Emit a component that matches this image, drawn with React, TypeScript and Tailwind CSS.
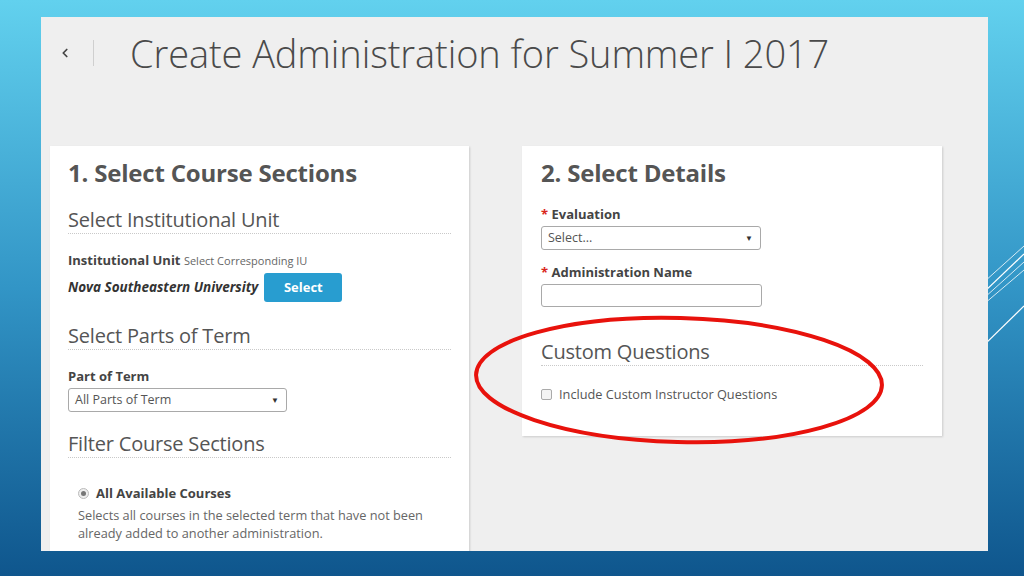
import { ChevronLeft } from 'lucide-react';

const font = { fontFamily: '"Open Sans", "Noto Sans", sans-serif' };

function SectionTitle({ children }: { children: string }) {
  return (
    <div className="border-b border-dotted border-[#c9c9c9] text-[20px] font-normal leading-[27px] tracking-[-0.2px] text-[#555]">
      {children}
    </div>
  );
}

function FakeSelect({ label, width }: { label: string; width: string }) {
  return (
    <div
      className={`flex h-[24px] items-center justify-between rounded-[3px] border border-[#a9a9a9] bg-white pl-[6px] pr-[7px] text-[12.5px] text-[#555] ${width}`}
    >
      <span>{label}</span>
      <span className="text-[8px] text-[#333]">▼</span>
    </div>
  );
}

export default function App() {
  return (
    <div
      style={font}
      className="relative h-[576px] w-[1024px] overflow-hidden bg-gradient-to-b from-[#62d1ee] via-[#3295c6] to-[#0f568d]"
    >
      {/* decorative stripes */}
      <svg className="absolute right-0 top-[230px] h-[130px] w-[40px]" viewBox="0 0 40 130">
        <line x1="0" y1="52" x2="40" y2="16" stroke="white" strokeWidth="0.8" />
        <line x1="0" y1="62" x2="40" y2="24" stroke="white" strokeWidth="1.2" />
        <line x1="0" y1="68" x2="40" y2="32" stroke="white" strokeWidth="0.8" />
        <line x1="0" y1="74" x2="40" y2="40" stroke="white" strokeWidth="0.8" />
        <line x1="0" y1="115" x2="40" y2="76" stroke="white" strokeWidth="1.2" />
      </svg>

      <div className="pl-[41px] pt-[17px]">
        <div className="relative h-[534px] w-[947px] overflow-hidden bg-[#efefef]">
          <div className="flex h-[70px] items-center pt-[1px]">
            <div className="flex w-[52px] items-center justify-end pr-[21px]">
              <ChevronLeft size={14} strokeWidth={3} className="text-[#444]" />
            </div>
            <div className="h-[26px] w-px bg-[#cfcfcf]" />
            <h1 className="ml-[36px] text-[38px] font-light leading-none tracking-[-0.1px] text-[#4a4a4a]">
              Create Administration for Summer I 2017
            </h1>
          </div>

          <div className="mt-[59px] flex items-start gap-[53px] pl-[9px]">
            {/* left card */}
            <div className="h-[420px] w-[419px] bg-white px-[18px] pt-[12px] shadow-[1px_1px_2px_rgba(0,0,0,0.15)]">
              <h2 className="text-[24px] font-bold leading-[30px] tracking-[-0.2px] text-[#555]">1. Select Course Sections</h2>
              <div className="mt-[18px]">
                <SectionTitle>Select Institutional Unit</SectionTitle>
              </div>
              <div className="mt-[18px] text-[13px] leading-[16px] text-[#444]">
                <span className="font-bold">Institutional Unit</span>{' '}
                <span className="text-[11px] text-[#666]">Select Corresponding IU</span>
              </div>
              <div className="mt-[4px] flex items-center gap-[6px]">
                <span className="text-[13.5px] font-bold italic text-[#333]">Nova Southeastern University</span>
                <button
                  type="button"
                  className="h-[29px] w-[78px] rounded-[3px] bg-[#289dd0] text-[13px] font-bold text-white"
                >
                  Select
                </button>
              </div>
              <div className="mt-[20px]">
                <SectionTitle>Select Parts of Term</SectionTitle>
              </div>
              <div className="mt-[18px] text-[13px] font-bold leading-[16px] text-[#444]">Part of Term</div>
              <div className="mt-[4px]">
                <FakeSelect label="All Parts of Term" width="w-[219px]" />
              </div>
              <div className="mt-[18px]">
                <SectionTitle>Filter Course Sections</SectionTitle>
              </div>
              <div className="mt-[26px] flex items-center pl-[10px]">
                <span className="flex h-[11px] w-[11px] items-center justify-center rounded-full border border-[#bbb] bg-[#eee]">
                  <span className="h-[5px] w-[5px] rounded-full bg-[#777]" />
                </span>
                <span className="ml-[7px] text-[13px] font-bold text-[#444]">All Available Courses</span>
              </div>
              <p className="mt-[2px] pl-[10px] text-[12.75px] leading-[18px] text-[#666]">
                Selects all courses in the selected term that have not been
                <br />
                already added to another administration.
              </p>
            </div>

            {/* right card */}
            <div className="h-[290px] w-[420px] bg-white px-[19px] pt-[12px] shadow-[1px_1px_2px_rgba(0,0,0,0.15)]">
              <h2 className="text-[24px] font-bold leading-[30px] tracking-[-0.2px] text-[#555]">2. Select Details</h2>
              <div className="mt-[18px] text-[13px] font-bold leading-[16px] text-[#444]">
                <span className="text-[#d9261c]">*</span> Evaluation
              </div>
              <div className="mt-[4px]">
                <FakeSelect label="Select..." width="w-[220px]" />
              </div>
              <div className="mt-[14px] text-[13px] font-bold leading-[16px] text-[#444]">
                <span className="text-[#d9261c]">*</span> Administration Name
              </div>
              <div className="mt-[4px] h-[23px] w-[221px] rounded-[3px] border border-[#a9a9a9] bg-white" />
              <div className="mt-[31px]">
                <SectionTitle>Custom Questions</SectionTitle>
              </div>
              <div className="mt-[19px] flex items-center">
                <span className="h-[11px] w-[11px] rounded-[2px] border border-[#aaa] bg-[#f3f3f3]" />
                <span className="ml-[7px] text-[12.75px] text-[#555]">Include Custom Instructor Questions</span>
              </div>
            </div>
          </div>

          {/* red highlight ellipse */}
          <svg className="pointer-events-none absolute left-[430px] top-[295px] h-[140px] w-[420px]" viewBox="0 0 420 140">
            <ellipse cx="208" cy="68" rx="203" ry="62" fill="none" stroke="#e8120c" strokeWidth="4" transform="rotate(1.5 208 68)" />
          </svg>
        </div>
      </div>
    </div>
  );
}
